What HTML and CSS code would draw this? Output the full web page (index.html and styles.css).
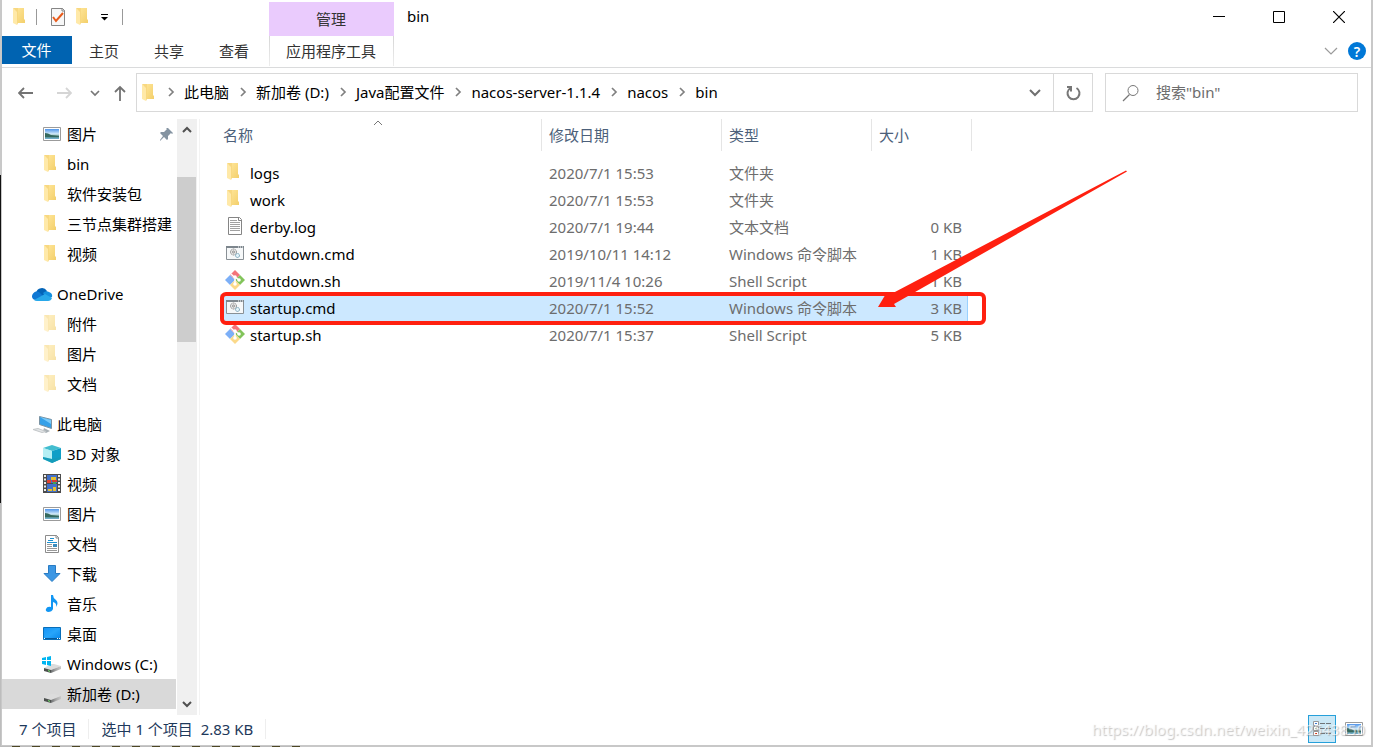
FILE: index.html
```html
<!DOCTYPE html>
<html lang="zh-CN">
<head>
<meta charset="utf-8">
<meta name="viewport" content="width=device-width, initial-scale=1">
<title>bin</title>
<link rel="stylesheet" href="styles.css">
</head>
<body>
<svg class="defs" aria-hidden="true">
  <defs>
    <linearGradient id="gold" x1="0" x2="1" y1="0" y2="1"><stop offset="0" stop-color="#ffe699"/><stop offset="1" stop-color="#f3cf6b"/></linearGradient>
    <linearGradient id="sky" x1="0" x2="0" y1="0" y2="1"><stop offset="0" stop-color="#4f94ea"/><stop offset=".5" stop-color="#d4ecfa"/><stop offset=".75" stop-color="#4e8576"/><stop offset="1" stop-color="#77b5dc"/></linearGradient>
    <linearGradient id="screen" x1="0" x2="1" y1="0" y2="1"><stop offset="0" stop-color="#1593f5"/><stop offset=".5" stop-color="#27a5fb"/><stop offset="1" stop-color="#0786ea"/></linearGradient>
    <linearGradient id="metal" x1="0" x2="1"><stop offset="0" stop-color="#6c6f70"/><stop offset=".5" stop-color="#a9a9a9"/><stop offset="1" stop-color="#c9c9c9"/></linearGradient>
    <symbol id="folder" viewBox="0 0 20 20"><path d="M5 1h8v11l1 1v3H6z" fill="url(#gold)"/><path d="M2 1l4 3v14l-4-2z" fill="#ffe9a8"/><path d="M2 1h5v15l-1 2V5z" fill="#f8d880"/></symbol>
    <symbol id="picture" viewBox="0 0 20 20"><path d="M1.500 3.500h17v13h-17z" fill="#fff" stroke="#9b9b9b"/><path d="M3 5h14v10H3z" fill="url(#sky)"/><path d="M3 9q3 0 6 2l8 1v1H3z" fill="#35695e"/></symbol>
    <symbol id="cloud" viewBox="0 0 22 20"><path d="M5 9a6 6 0 0 1 11-2l-3 6z" fill="#0364b8"/><path d="M1 13a5 5 0 0 1 7-5l8 8H5a4 4 0 0 1-4-3z" fill="#0f78d4"/><path d="M12 9q3-3 6-1a4 4 0 0 1 3 5l-5 2z" fill="#1490df"/><path d="M3 16l11-6 7 4q-1 3-4 3H6q-2 0-3-1z" fill="#28a8ea"/></symbol>
    <symbol id="pc" viewBox="0 0 22 20"><path d="M8.500 2.500l12 3v9l-12-4z" fill="#35a0e8" stroke="#7b93a3"/><path d="M9 3l11 3v4z" fill="#78c9f8"/><path d="M13 14l6 3-4 2-3-2z" fill="#a9b1b6"/><path d="M2 15.500l5-1 8 3-4 1z" fill="#e3e6e8" stroke="#c3c7c9"/></symbol>
    <symbol id="cube" viewBox="0 0 20 20"><path d="M10 1l9 3-9 3-9-3z" fill="#43bdcf"/><path d="M1 4l9 3v12l-9-4z" fill="#82dce8"/><path d="M1 4l9 3v8l-9-2z" fill="#b4eff4"/><path d="M19 4l-9 3v12l9-4z" fill="#109fc7"/><path d="M10 15l9-2v2l-9 4-9-4v-2z" fill="#159cba"/></symbol>
    <symbol id="film" viewBox="0 0 20 20"><path d="M1 0h18v19H1z" fill="#4c4c4c"/><path d="M3 1v17M17 1v17" stroke="#eee" stroke-width="2" stroke-dasharray="2 1.500"/><path d="M5 1h10v8H5zM5 10h10v8H5z" fill="#4270c9"/><path d="M5 6h4v3H5z" fill="#df4332"/><path d="M9 3h5v3H9zM6 15h4v2H6zM11 13h3v4h-3z" fill="#e7bf2e"/><path d="M10 6h5v2h-5z" fill="#d83a32"/><path d="M11 8h3v2h-3z" fill="#43a356"/></symbol>
    <symbol id="doc" viewBox="0 0 20 20"><path d="M3.500 1.500h11l2 2v15h-13z" fill="#fff" stroke="#8c8c8c"/><path d="M14 1v3h3" fill="none" stroke="#8c8c8c"/><path d="M8 4.500h4M6 6.500h5M5 8.500h10" stroke="#1d91d1"/><path d="M5 10.500h5M5 12.500h5M5 14.500h10M5 16.500h10" stroke="#999"/><path d="M11 10h4v3h-4z" fill="#3b8cbd"/></symbol>
    <symbol id="down" viewBox="0 0 20 20"><path d="M6.500 1.500h7v8h4.500l-8 8-8-8h4.500z" fill="#3c97e4" stroke="#287bc3"/></symbol>
    <symbol id="note" viewBox="0 0 20 20"><path d="M9 1h2q0 3 3 5 3 3 0 7 1-4-3-5v7q-1 3-5 3-3-1-2-3 1-3 5-2z" fill="#1296f3"/></symbol>
    <symbol id="desktop" viewBox="0 0 20 20"><path d="M1.500 3.500h17v12h-17z" fill="url(#screen)" stroke="#086eb9"/><path d="M2 14.500h16" stroke="#06599b"/><path d="M2 14.500h1M15 14.500h1M17 14.500h1" stroke="#fff"/></symbol>
    <symbol id="drive" viewBox="0 0 20 20"><path d="M2 14l7-4h3l7 2-10 4z" fill="#dcdcdc"/><path d="M2 14l7 2v3l-7-2z" fill="#4c504e"/><path d="M9 16l10-4v3L9 19z" fill="url(#metal)"/><path d="M6 16l2 1v1l-2-1z" fill="#71e76b"/></symbol>
    <symbol id="windrive" viewBox="0 0 20 20"><use href="#drive"/><path d="M0 4l4-1v3H0zM5 3l4-1v4H5zM0 7h4v4l-4-1zM5 7h4v5l-4-1z" fill="#00b5f1"/></symbol>
    <symbol id="text" viewBox="0 0 20 20"><path d="M3.500 1.500h11l2 2v15h-13z" fill="#fff" stroke="#858585"/><path d="M13.500 1v3.500h3" fill="none" stroke="#858585"/><path d="M5 4.500h7M5 6.500h10M5 8.500h10M5 10.500h10M5 12.500h10M5 14.500h10" stroke="#a1a1a1"/></symbol>
    <symbol id="cmd" viewBox="0 0 20 20"><path d="M1.500 3.500h17v13h-17z" fill="#f6f8f9" stroke="#899095"/><path d="M1 4h18" stroke="#7d868d" stroke-width="2"/><path d="M13 4h1M15 4h1M17 4h1" stroke="#fff"/><circle cx="8.500" cy="9" r="3" fill="#e6e6e6" stroke="#858585" stroke-dasharray="1.300 .6"/><circle cx="8.500" cy="9" r="1" fill="#fff" stroke="#888"/><circle cx="12.500" cy="12.500" r="2" fill="#e4f3fa" stroke="#6798ae" stroke-dasharray="1.300 .5"/></symbol>
    <symbol id="git" viewBox="0 0 20 20"><path d="M10 0l5 5-5 5-5-5z" fill="#f4747a"/><path d="M5 5l5 5-5 5-5-5z" fill="#7caff7"/><path d="M15 5l5 5-5 5-5-5z" fill="#82c45a"/><path d="M10 10l5 5-5 5-5-5z" fill="#fbd98a"/><path d="M6 4l4 4v7M10 7l4 3" fill="none" stroke="#fff" stroke-width="1.500"/><circle cx="10" cy="7" r="1.800" fill="#fff"/><circle cx="10" cy="14" r="1.800" fill="#fff"/><circle cx="14" cy="10" r="1.800" fill="#fff"/></symbol>
    <symbol id="sep" viewBox="0 0 10 10"><path d="M3 1l4 4-4 4" fill="none" stroke="#808080" stroke-width="1.700"/></symbol>
  </defs>
</svg>
<div class="window">
  <header class="titlebar">
    <div class="quick">
      <svg class="icon"><use href="#folder"/></svg>
      <span class="bar"></span>
      <button class="plain" aria-label="属性"><svg class="icon" viewBox="0 0 20 20"><path d="M3.500 1.500h11l2 2v15h-13z" fill="#f7f7f7" stroke="#858585"/><path d="M14 1v3h3" fill="none" stroke="#858585"/><path d="M5 10l3 4 7-8" fill="none" stroke="#e85a1a" stroke-width="2"/></svg></button>
      <button class="plain" aria-label="新建文件夹"><svg class="icon"><use href="#folder"/></svg></button>
      <button class="plain more" aria-label="自定义快速访问工具栏"><svg width="8" height="8" viewBox="0 0 8 8"><path d="M0 1.500h7" stroke="#000"/><path d="M0 4h7L3.500 7.500z"/></svg></button>
      <span class="bar"></span>
    </div>
    <div class="context">管理</div>
    <h1 class="title">bin</h1>
    <div class="controls">
      <button aria-label="最小化"><svg width="12" height="12"><path d="M0 5.500h12" stroke="#000"/></svg></button>
      <button aria-label="最大化"><svg width="12" height="12"><path d="M.5.500h11v11H.5z" fill="none" stroke="#000"/></svg></button>
      <button aria-label="关闭"><svg width="12" height="12"><path d="M0 0l12 12M12 0L0 12" stroke="#000" stroke-width="1.200"/></svg></button>
    </div>
  </header>
  <nav class="tabs" aria-label="功能区">
    <button class="tab file">文件</button>
    <button class="tab">主页</button>
    <button class="tab">共享</button>
    <button class="tab">查看</button>
    <button class="tab tools">应用程序工具</button>
    <div class="help">
      <button class="plain" aria-label="展开功能区"><svg width="14" height="8" viewBox="0 0 14 8"><path d="M1 1l6 6 6-6" fill="none" stroke="#9b9b9b" stroke-width="1.200"/></svg></button>
      <button class="question" aria-label="帮助">?</button>
    </div>
  </nav>
  <div class="location">
    <div class="history">
      <button class="plain" aria-label="后退"><svg width="16" height="14" viewBox="0 0 16 14"><path d="M6 2L1 7l5 5M1 7h14" fill="none" stroke="#737373" stroke-width="1.800"/></svg></button>
      <button class="plain forward" aria-label="前进" disabled><svg width="16" height="14" viewBox="0 0 16 14"><path d="M10 2l5 5-5 5M15 7H1" fill="none" stroke="#d5d5d5" stroke-width="1.800"/></svg></button>
      <button class="plain recent" aria-label="最近浏览的位置"><svg width="10" height="8" viewBox="0 0 10 8"><path d="M1 2l4 4 4-4" fill="none" stroke="#777" stroke-width="1.700"/></svg></button>
      <button class="plain up" aria-label="上移"><svg width="14" height="16" viewBox="0 0 14 16"><path d="M2 7l5-5 5 5M7 2v14" fill="none" stroke="#737373" stroke-width="1.800"/></svg></button>
    </div>
    <div class="address">
      <svg class="icon"><use href="#folder"/></svg>
      <ol class="crumbs">
        <li><svg class="sep"><use href="#sep"/></svg><a href="#">此电脑</a></li>
        <li><svg class="sep"><use href="#sep"/></svg><a href="#">新加卷 (D:)</a></li>
        <li><svg class="sep"><use href="#sep"/></svg><a href="#">Java配置文件</a></li>
        <li><svg class="sep"><use href="#sep"/></svg><a href="#">nacos-server-1.1.4</a></li>
        <li><svg class="sep"><use href="#sep"/></svg><a href="#">nacos</a></li>
        <li><svg class="sep"><use href="#sep"/></svg><a href="#">bin</a></li>
      </ol>
      <button class="drop" aria-label="以前的位置"><svg width="12" height="8" viewBox="0 0 12 8"><path d="M1 1l5 5 5-5" fill="none" stroke="#707070" stroke-width="2"/></svg></button>
      <button class="refresh" aria-label="刷新"><svg width="16" height="16" viewBox="0 0 16 16"><path d="M11.500 3a6 6 0 1 1-6 0M2 2h4v4.500" fill="none" stroke="#777" stroke-width="2"/></svg></button>
    </div>
    <label class="search">
      <svg width="18" height="18" viewBox="0 0 18 18"><circle cx="11" cy="6.500" r="5" fill="none" stroke="#777"/><path d="M7.500 10.500L1 17" stroke="#777" stroke-width="1.200"/></svg>
      <input type="search" aria-label="搜索" placeholder='搜索"bin"'>
    </label>
  </div>
  <div class="main">
    <nav class="tree" aria-label="导航窗格">
      <ul>
        <li><a href="#"><svg class="icon"><use href="#picture"/></svg>图片<svg class="pin" width="14" height="14" viewBox="0 0 14 14"><path d="M8 1l5 5-1 1-1-1-3 3v3l-1 1-3-3-4 4 0-1 3-4-3-3 1-1h3l3-3-1-1z" fill="#8594a2"/></svg></a></li>
        <li><a href="#"><svg class="icon"><use href="#folder"/></svg>bin</a></li>
        <li><a href="#"><svg class="icon"><use href="#folder"/></svg>软件安装包</a></li>
        <li><a href="#"><svg class="icon"><use href="#folder"/></svg>三节点集群搭建</a></li>
        <li><a href="#"><svg class="icon"><use href="#folder"/></svg>视频</a></li>
      </ul>
      <ul>
        <li><a class="root" href="#"><svg class="icon wide"><use href="#cloud"/></svg>OneDrive</a></li>
        <li><a href="#"><svg class="icon pale"><use href="#folder"/></svg>附件</a></li>
        <li><a href="#"><svg class="icon pale"><use href="#folder"/></svg>图片</a></li>
        <li><a href="#"><svg class="icon pale"><use href="#folder"/></svg>文档</a></li>
      </ul>
      <ul>
        <li><a class="root" href="#"><svg class="icon wide"><use href="#pc"/></svg>此电脑</a></li>
        <li><a href="#"><svg class="icon"><use href="#cube"/></svg>3D 对象</a></li>
        <li><a href="#"><svg class="icon"><use href="#film"/></svg>视频</a></li>
        <li><a href="#"><svg class="icon"><use href="#picture"/></svg>图片</a></li>
        <li><a href="#"><svg class="icon"><use href="#doc"/></svg>文档</a></li>
        <li><a href="#"><svg class="icon"><use href="#down"/></svg>下载</a></li>
        <li><a href="#"><svg class="icon"><use href="#note"/></svg>音乐</a></li>
        <li><a href="#"><svg class="icon"><use href="#desktop"/></svg>桌面</a></li>
        <li><a href="#"><svg class="icon"><use href="#windrive"/></svg>Windows (C:)</a></li>
        <li><a class="current" href="#"><svg class="icon"><use href="#drive"/></svg>新加卷 (D:)</a></li>
      </ul>
    </nav>
    <div class="scroll">
      <button class="plain" aria-label="向上滚动"><svg width="10" height="8" viewBox="0 0 10 8"><path d="M1 6l4-4 4 4" fill="none" stroke="#505050" stroke-width="2"/></svg></button>
      <div class="track"><div class="thumb"></div></div>
      <button class="plain" aria-label="向下滚动"><svg width="10" height="8" viewBox="0 0 10 8"><path d="M1 2l4 4 4-4" fill="none" stroke="#505050" stroke-width="2"/></svg></button>
    </div>
    <main class="pane">
      <table class="files">
        <thead>
          <tr><th class="name">名称<svg class="sort" width="10" height="6" viewBox="0 0 10 6"><path d="M1 5l4-4 4 4" fill="none" stroke="#777"/></svg></th><th class="date">修改日期</th><th class="type">类型</th><th class="size">大小</th></tr>
        </thead>
        <tbody>
          <tr><td><span class="item"><svg class="icon"><use href="#folder"/></svg>logs</span></td><td>2020/7/1 15:53</td><td>文件夹</td><td></td></tr>
          <tr><td><span class="item"><svg class="icon"><use href="#folder"/></svg>work</span></td><td>2020/7/1 15:53</td><td>文件夹</td><td></td></tr>
          <tr><td><span class="item"><svg class="icon"><use href="#text"/></svg>derby.log</span></td><td>2020/7/1 19:44</td><td>文本文档</td><td>0 KB</td></tr>
          <tr><td><span class="item"><svg class="icon"><use href="#cmd"/></svg>shutdown.cmd</span></td><td>2019/10/11 14:12</td><td>Windows 命令脚本</td><td>1 KB</td></tr>
          <tr><td><span class="item"><svg class="icon"><use href="#git"/></svg>shutdown.sh</span></td><td>2019/11/4 10:26</td><td>Shell Script</td><td>1 KB</td></tr>
          <tr class="selected"><td><span class="item"><svg class="icon"><use href="#cmd"/></svg>startup.cmd</span></td><td>2020/7/1 15:52</td><td>Windows 命令脚本</td><td>3 KB</td></tr>
          <tr><td><span class="item"><svg class="icon"><use href="#git"/></svg>startup.sh</span></td><td>2020/7/1 15:37</td><td>Shell Script</td><td>5 KB</td></tr>
        </tbody>
      </table>
      <svg class="markup" width="960" height="240" viewBox="0 0 960 240" aria-hidden="true">
        <rect x="22" y="175" width="762" height="29" rx="4" fill="none" stroke="#ff2010" stroke-width="4"/>
        <path d="M678 188l9-15 6 1L926 51.500l1 1L694 185l2 3z" fill="#ff2010"/>
      </svg>
    </main>
  </div>
  <footer class="status">
    <span class="count">7 个项目</span>
    <span class="picked">选中 1 个项目&nbsp; 2.83 KB</span>
    <div class="views">
      <button class="view active" aria-label="详细信息"><svg width="20" height="18" viewBox="0 0 20 18"><g fill="#fff" stroke="#999"><path d="M1.500 1.500h5v4h-5zM1.500 6.500h5v4h-5zM1.500 11.500h5v4h-5z"/></g><path d="M3 3h2v1H3z" fill="#3a7bd5"/><path d="M3 8h2v1H3z" fill="#498a37"/><path d="M3 13h2v1H3z" fill="#d02d13"/><path d="M8 3.500h5M14 3.500h5M8 8.500h5M14 8.500h5M8 13.500h5M14 13.500h5" stroke="#707579"/></svg></button>
      <button class="view" aria-label="大图标"><svg class="icon"><use href="#picture"/></svg></button>
    </div>
    <span class="watermark">https://blog.csdn.net/weixin_42543850</span>
  </footer>
</div>
</body>
</html>
```
FILE: styles.css
```css
* { box-sizing: border-box; }
body {
  margin: 0;
  min-height: 100vh;
  display: grid;
  padding: 0 2px 2px;
  font: 15px/20px "Noto Sans", "Noto Sans CJK SC", sans-serif;
  color: #000;
  background:
    linear-gradient(#c9c9c9 175px, #111 175px 503px, #bdbdbd 503px) left / 1px 100% no-repeat,
    repeating-linear-gradient(90deg, #bbb 0 12px, #4d4623 12px 20px) left bottom / 300px 1px no-repeat,
    #c8c8c8;
}
button, input { font: inherit; color: inherit; }
button { border: 0; padding: 0; background: none; display: grid; place-items: center; }
a { color: inherit; text-decoration: none; }
ul, ol { list-style: none; margin: 0; padding: 0; }
svg { display: block; flex: none; }
.defs { position: absolute; width: 0; height: 0; }
.icon { width: 20px; height: 20px; }
.pale { opacity: .6; }
.window {
  display: grid;
  grid-template-rows: 36px 32px auto 1fr 30px;
  background: #fff;
  min-width: 0;
}
.titlebar { display: flex; }
.quick { width: 267px; display: flex; align-items: center; padding: 0 0 2px 9px; }
.bar { width: 1px; height: 16px; background: #999; margin: 0 11px 0 5px; }
.quick .bar + .plain { margin-right: 6px; }
.more { width: 22px; height: 20px; }
.more + .bar { margin: 0 6px; }
.context { width: 125px; margin-top: 2px; padding-right: 1px; background: #eacbfd; color: #333; display: grid; place-items: center; }
.title { margin: 0; padding: 6px 13px; font-size: 15px; font-weight: 400; flex: 1; }
.controls { display: flex; padding: 0 2px 2px 0; }
.controls button { width: 60px; }
.tabs { display: flex; border-bottom: 1px solid #dadbdc; color: #333; }
.tab { width: 65px; height: 30px; padding-right: 1px; }
.file { width: 70px; height: 28px; background: #0063b1; color: #fff; }
.tools {
  width: 125px;
  margin-left: 2px;
  border: solid;
  border-width: 0 1px;
  border-image: linear-gradient(#d5d5d5, #eee) 1;
}
.help { margin-left: auto; display: flex; align-items: center; gap: 10px; padding: 0 5px 2px 0; }
.question { width: 18px; height: 18px; border-radius: 50%; background: #0078d7; color: #fff; font-weight: 600; font-size: 14px; }
.location { display: flex; padding: 5px 13px 7px 0; }
.history { width: 134px; display: flex; align-items: center; padding-left: 16px; }
.forward { margin-left: 22px; }
.recent { margin-left: 18px; }
.up { margin-left: 13px; }
.address { flex: 1; height: 39px; min-width: 0; border: 1px solid #d9d9d9; display: flex; align-items: center; padding-left: 3px; }
.crumbs { display: flex; flex: 1; white-space: nowrap; padding-bottom: 1px; }
.crumbs li { display: flex; align-items: center; }
.sep { width: 10px; height: 10px; margin: 0 8px 0 9px; }
.crumbs li:first-child .sep { margin-left: 6px; }
.drop { width: 37px; }
.refresh { width: 39px; align-self: stretch; border-left: 1px solid #d9d9d9; }
.search { width: 253px; margin-left: 12px; border: 1px solid #d9d9d9; display: flex; align-items: center; padding-left: 16px; gap: 16px; }
.search input { flex: 1; min-width: 0; border: 0; padding: 0 0 2px; outline: 0; background: none; }
.search input::placeholder { color: #6d6d6d; opacity: 1; }
.main { display: flex; min-width: 0; }
.tree { width: 174px; display: flex; flex-direction: column; gap: 10px; padding-bottom: 6px; }
.tree a { display: flex; align-items: center; height: 30px; gap: 5px; padding-left: 40px; white-space: nowrap; }
.tree .root { padding-left: 29px; gap: 4px; }
.wide { width: 22px; }
.pin { margin: 0 2px 0 auto; }
.current { background: #d9d9d9; }
.scroll { width: 20px; margin-left: 1px; background: #f0f0f0; display: flex; flex-direction: column; }
.scroll button { height: 22px; width: 19px; }
.track { flex: 1; padding-top: 36px; }
.thumb { width: 19px; height: 32%; background: #cdcdcd; }
.pane { position: relative; flex: 1; margin-left: 2px; border-left: 1px solid #f3f3f3; padding-left: 20px; }
.files { border-collapse: separate; border-spacing: 0; table-layout: fixed; width: 752px; }
.files th { height: 32px; padding: 0 7px; text-align: left; font-weight: 400; color: #4c607a; border-right: 1px solid #e5e5e5; }
.files .name { width: 322px; padding-left: 3px; position: relative; }
.sort { position: absolute; right: 158px; top: 1px; }
.date { width: 180px; }
.type { width: 150px; }
.size { width: 100px; }
.files td { height: 27px; padding: 0 7px; color: #6d6d6d; white-space: nowrap; }
.files td:first-child { color: #000; padding-left: 5px; }
.files tbody::before { content: ""; display: block; height: 8px; }
.files td:last-child { text-align: right; padding-right: 6px; border-right: 4px solid transparent; background-clip: padding-box; }
.item { display: flex; align-items: center; gap: 5px; }
.item .icon { margin-bottom: 2px; }
.selected td { background-color: #cce8ff; }
.selected td:last-child { box-shadow: inset -1px 0 #99d1ff; }
.markup { position: absolute; left: 0; top: 0; pointer-events: none; }
.status { position: relative; display: flex; align-items: center; padding: 0 3px 2px 17px; color: #1e395b; }
.count { padding-right: 12px; border-right: 1px solid #eee; }
.picked { padding: 0 12px; border-right: 1px solid #eee; }
.views { margin-left: auto; display: flex; gap: 4px; }
.view { width: 28px; height: 28px; border: 1px solid transparent; }
.active { border-color: #26a0da; background: #cbe8f6; }
.watermark { position: absolute; right: 6px; top: 4px; color: rgba(255, 255, 255, .6); text-shadow: 1px 1px 1px rgba(140, 140, 140, .5); pointer-events: none; }
```
